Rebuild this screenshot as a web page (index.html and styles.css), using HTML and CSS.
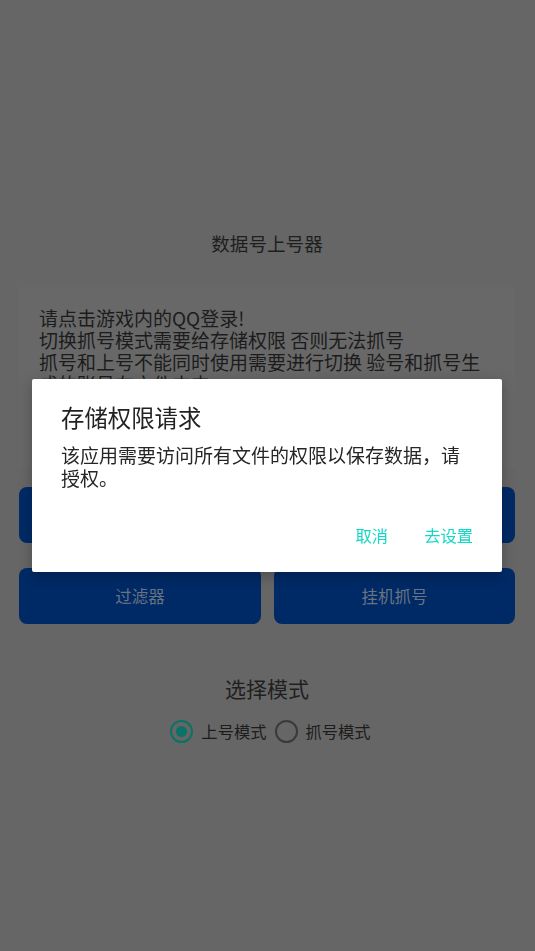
FILE: index.html
```html
<!DOCTYPE html>
<html lang="zh-CN">
<head>
<meta charset="utf-8">
<title>数据号上号器</title>
<link rel="stylesheet" href="styles.css">
</head>
<body>
<div class="app">
  <h1 class="app-title">数据号上号器</h1>
  <div class="notice">
    <p>请点击游戏内的QQ登录!<br>切换抓号模式需要给存储权限 否则无法抓号<br>抓号和上号不能同时使用需要进行切换 验号和抓号生成的账号在文件夹内</p>
  </div>
  <div class="actions">
    <button class="action">开始上号</button>
    <button class="action">验号</button>
    <button class="action">过滤器</button>
    <button class="action">挂机抓号</button>
  </div>
  <h2 class="mode-title">选择模式</h2>
  <div class="modes">
    <label class="mode"><span class="radio checked"></span><span>上号模式</span></label>
    <label class="mode"><span class="radio"></span><span>抓号模式</span></label>
  </div>
</div>

<div class="dialog">
  <div class="dialog-title">存储权限请求</div>
  <div class="dialog-msg">该应用需要访问所有文件的权限以保存数据，请授权。</div>
  <div class="dialog-buttons">
    <span class="dlg-btn">取消</span>
    <span class="dlg-btn">去设置</span>
  </div>
</div>
</body>
</html>
```

FILE: styles.css
```css
html, body {
  margin: 0;
  padding: 0;
}
body {
  width: 535px;
  height: 951px;
  background: #666666;
  font-family: "Noto Sans CJK SC", "Noto Sans", sans-serif;
  overflow: hidden;
}
.app {
  padding: 230px 20px 0 19px;
}
.app-title {
  margin: 0;
  text-align: center;
  font-size: 18.6px;
  font-weight: normal;
  line-height: 26px;
  color: #1f1f1f;
}
.notice {
  margin-top: 31px;
  height: 180px;
  box-sizing: border-box;
  background: #686868;
  padding: 20px 20px 0 20px;
}
.notice p {
  margin: 0;
  font-size: 19px;
  line-height: 22px;
  color: #1c1c1c;
}
.actions {
  margin-top: 20px;
  display: grid;
  grid-template-columns: 242px 241px;
  column-gap: 13px;
  row-gap: 25px;
}
.action {
  height: 56px;
  border: none;
  border-radius: 8px;
  background: #002a66;
  color: #6a7382;
  font-family: "Noto Sans CJK SC", "Noto Sans", sans-serif;
  font-size: 16.5px;
  padding: 0;
}
.mode-title {
  margin: 50px 0 0;
  text-align: center;
  font-size: 21px;
  font-weight: normal;
  line-height: 28px;
  color: #1f1f1f;
}
.modes {
  margin-top: 17px;
  display: flex;
  justify-content: center;
  gap: 8px;
  padding-left: 7px;
}
.mode {
  display: flex;
  align-items: center;
  gap: 8px;
  font-size: 16.3px;
  line-height: 24px;
  color: #1c1c1c;
}
.radio {
  width: 23px;
  height: 23px;
  box-sizing: border-box;
  border: 2.5px solid #3a3a3a;
  border-radius: 50%;
  display: flex;
  align-items: center;
  justify-content: center;
}
.radio.checked {
  border-color: #0b7266;
}
.radio.checked::after {
  content: "";
  width: 11px;
  height: 11px;
  border-radius: 50%;
  background: #0b7266;
}
.dialog {
  position: fixed;
  left: 32px;
  top: 379px;
  width: 470px;
  height: 193px;
  box-sizing: border-box;
  background: #ffffff;
  border-radius: 2px;
  box-shadow: 0 4px 14px rgba(0, 0, 0, 0.25);
  padding: 23px 29px 0 29px;
}
.dialog-title {
  font-size: 23.4px;
  line-height: 30px;
  color: #222222;
}
.dialog-msg {
  margin-top: 11px;
  font-size: 19px;
  line-height: 23px;
  color: #262626;
}
.dialog-buttons {
  margin-top: 28px;
  display: flex;
  justify-content: flex-end;
  gap: 36px;
}
.dlg-btn {
  font-size: 16.3px;
  line-height: 36px;
  color: #14d8c6;
}
```
